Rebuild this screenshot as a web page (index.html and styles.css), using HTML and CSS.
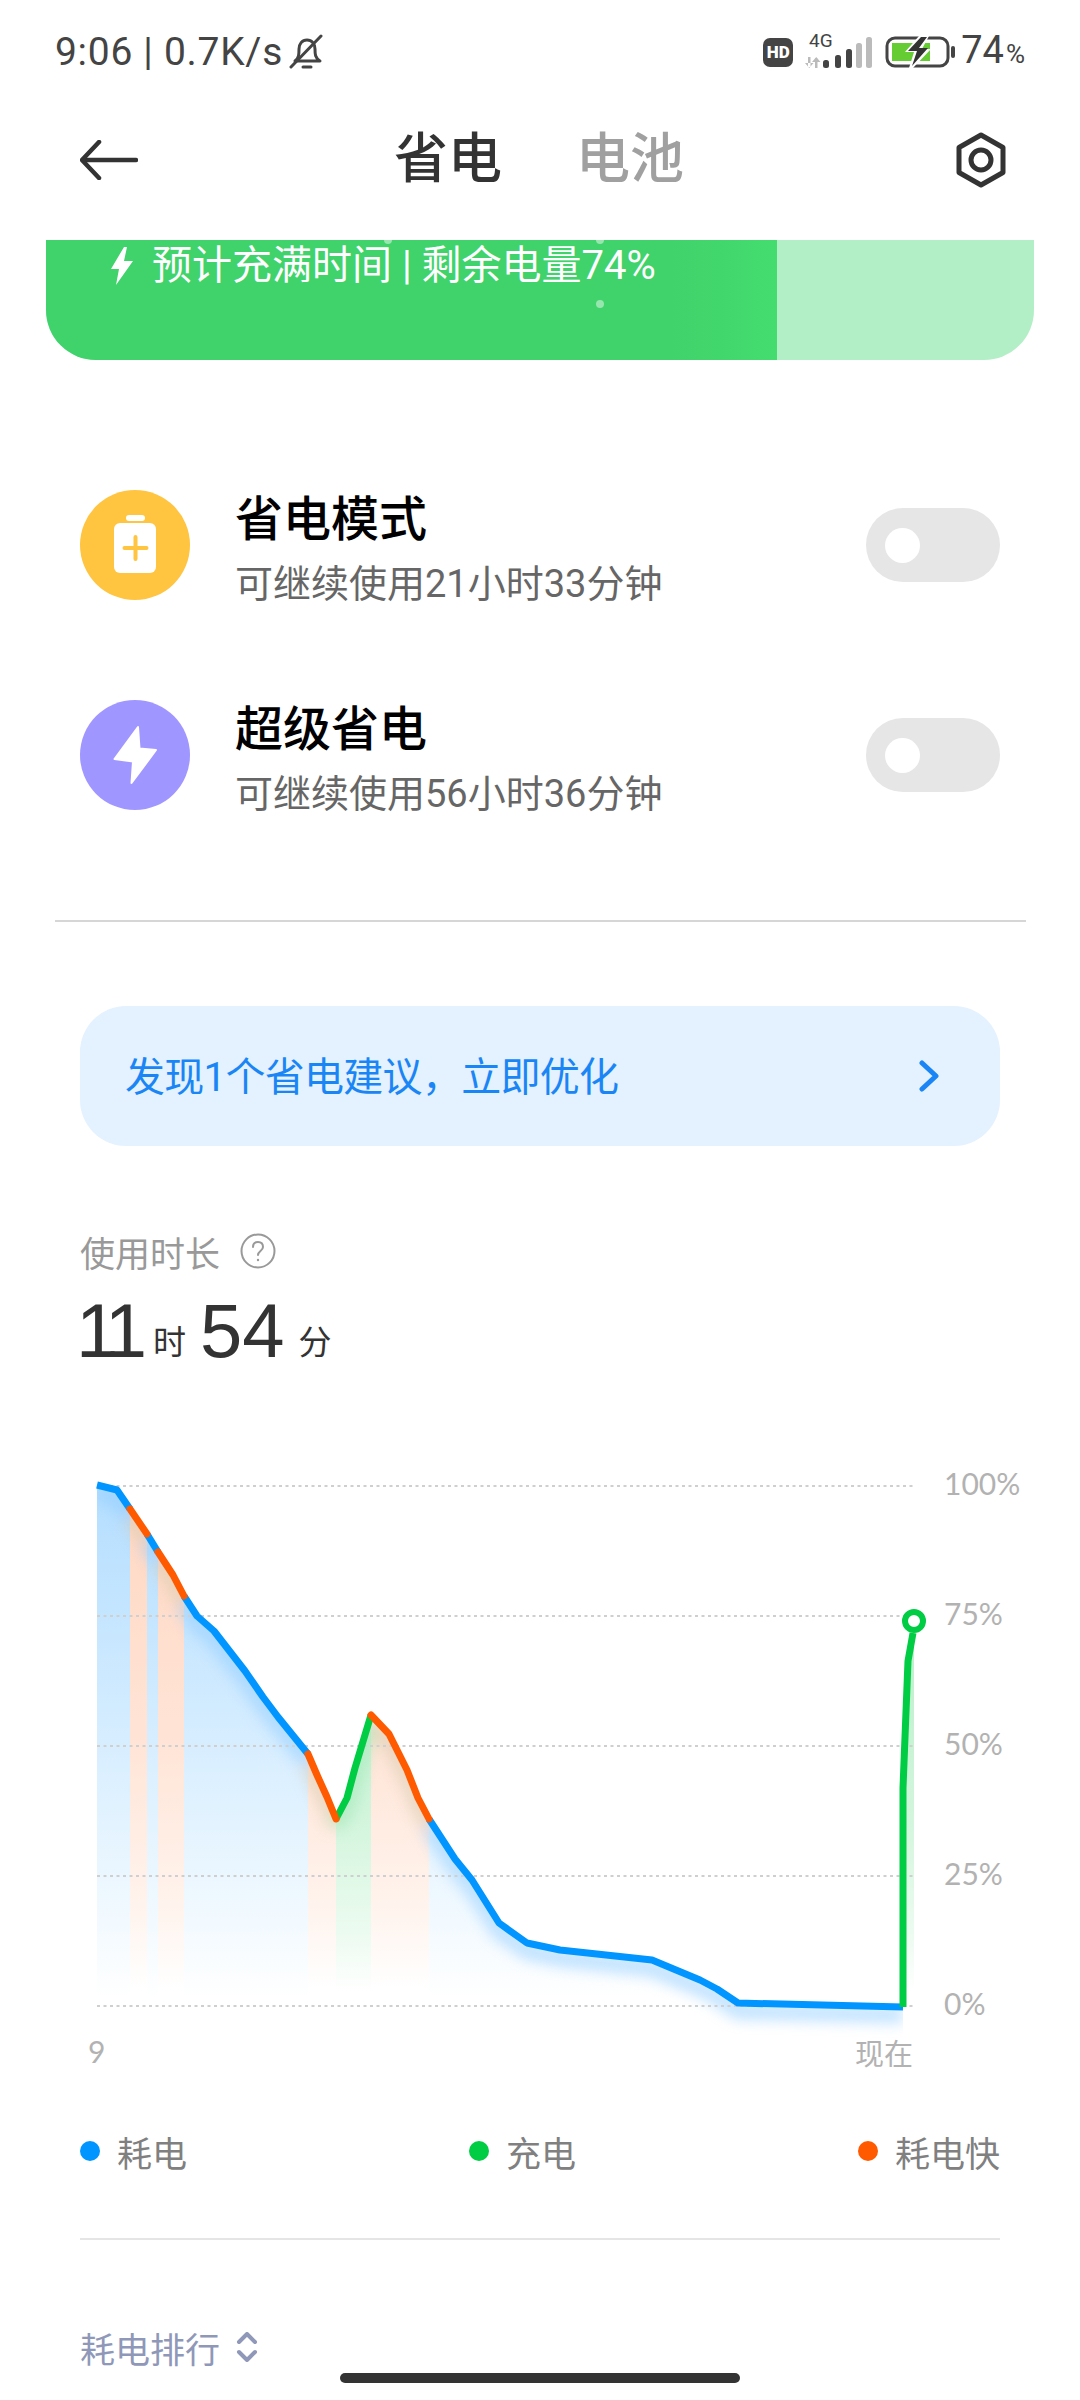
FILE: index.html
```html
<!DOCTYPE html>
<html lang="zh-CN">
<head>
<meta charset="UTF-8">
<title>省电</title>
<link rel="stylesheet" href="styles.css">
</head>
<body>

<div class="status">
  <div class="status-left">
    <span class="status-text">9:06 | 0.7K/s</span>
    <svg class="bell" width="36" height="36" viewBox="0 0 36 36" fill="none" stroke="#444" stroke-width="3" stroke-linecap="round" stroke-linejoin="round">
      <path d="M7 27c4-3 4-7 4-12 0-5 3-9 8-9s8 4 8 9c0 5 0 9 5 12z"/>
      <path d="M15 33h8"/>
      <path d="M3 33L33 2"/>
    </svg>
  </div>
  <div class="status-right">
    <span class="hd">HD</span>
    <svg class="net" width="66" height="44" viewBox="0 -4 66 44">
      <text x="4" y="13" class="net-text">4G</text>
      <path d="M3 23v10h2.500v-10zM0 29h8.500l-4.250 5zM10 24v10h2.500v-10zM7 28h8.500l-4.250-5z" fill="#bbb"/>
      <rect x="18" y="26" width="6" height="8" rx="2.500" fill="#444"/>
      <rect x="30" y="21" width="6" height="13" rx="2.500" fill="#444"/>
      <rect x="41" y="15" width="6" height="19" rx="2.500" fill="#444"/>
      <rect x="51" y="9" width="6" height="25" rx="2.500" fill="#bbb"/>
      <rect x="61" y="3" width="6" height="31" rx="2.500" fill="#bbb"/>
    </svg>
    <svg class="batt" width="70" height="32" viewBox="0 0 70 32">
      <rect x="2" y="2" width="61" height="28" rx="8" fill="none" stroke="#444" stroke-width="3"/>
      <rect x="7" y="7" width="38" height="18" fill="#66cc33"/>
      <path d="M34 0L20 16h9l-5 16 4 0 18-19h-9l7-13z" fill="#fff"/>
      <path d="M36 1L23 15h9l-5 15 16-18h-9l8-11z" fill="#333"/>
      <rect x="66" y="10" width="4" height="12" rx="2" fill="#444"/>
    </svg>
    <span class="pct">74<small>%</small></span>
  </div>
</div>

<div class="nav">
  <svg class="back" width="58" height="40" viewBox="0 0 58 40" fill="none" stroke="#333" stroke-width="4.500" stroke-linecap="round" stroke-linejoin="round">
    <path d="M56 20H3"/>
    <path d="M19 2L2 20l17 18"/>
  </svg>
  <div class="tabs">
    <span class="tab active">省电</span>
    <span class="tab">电池</span>
  </div>
  <svg class="gear" width="54" height="56" viewBox="0 0 54 56" fill="none" stroke="#333" stroke-width="5" stroke-linejoin="round">
    <path d="M27 3l22 12.500v25L27 53 5 40.500v-25z"/>
    <circle cx="27" cy="28" r="10"/>
  </svg>
</div>

<div class="banner">
  <div class="banner-fill"></div>
  <i class="bubble b1"></i><i class="bubble b2"></i><i class="bubble b3"></i>
  <div class="banner-text">
    <svg width="24" height="38" viewBox="0 0 24 38" fill="#fff"><path d="M14 0L1 22h8l-3 16 17-24h-9l3-14z"/></svg>
    <span>预计充满时间 | 剩余电量74%</span>
  </div>
</div>

<div class="modes">
  <div class="mode">
    <div class="mode-icon orange">
      <svg width="110" height="110" viewBox="0 0 110 110">
        <rect x="46" y="25" width="19" height="6" rx="3" fill="#fff"/>
        <rect x="34" y="33" width="42" height="50" rx="6" fill="#fff"/>
        <path d="M44.500 58h22M55.500 47v22" stroke="#ffc440" stroke-width="4" stroke-linecap="round"/>
      </svg>
    </div>
    <div class="mode-text">
      <div class="mode-title">省电模式</div>
      <div class="mode-sub">可继续使用21小时33分钟</div>
    </div>
    <div class="toggle"><i></i></div>
  </div>
  <div class="mode">
    <div class="mode-icon purple">
      <svg width="110" height="110" viewBox="0 0 110 110">
        <path d="M58 27L34.500 59 53 61.500 51.500 83 76 50 59.500 48.500z" fill="#fff" stroke="#fff" stroke-width="2" stroke-linejoin="round"/>
      </svg>
    </div>
    <div class="mode-text">
      <div class="mode-title">超级省电</div>
      <div class="mode-sub">可继续使用56小时36分钟</div>
    </div>
    <div class="toggle"><i></i></div>
  </div>
</div>

<div class="divider"></div>

<div class="tip">
  <span class="tip-text">发现1个省电建议，立即优化</span>
  <svg width="22" height="32" viewBox="0 0 22 32" fill="none" stroke="#1a86f5" stroke-width="5" stroke-linecap="round" stroke-linejoin="round"><path d="M4 3l14 13L4 29"/></svg>
</div>

<div class="usage-label">
  <span>使用时长</span>
  <svg width="36" height="36" viewBox="0 0 36 36" fill="none" stroke="#999" stroke-width="2"><circle cx="18" cy="18" r="16.500"/><path d="M13 14c0-3 2-5 5-5s5 2 5 5c0 4-5 4-5 8" stroke-linecap="round"/><circle cx="18" cy="27" r="1.200" fill="#999" stroke="none"/></svg>
</div>
<div class="usage-value"><b class="hours">11</b><span>时</span><b>54</b><span>分</span></div>

<svg class="chart" width="1080" height="620" viewBox="0 1460 1080 620">
  <defs>
    <linearGradient id="fillBlue" gradientUnits="userSpaceOnUse" x1="0" y1="1486" x2="0" y2="1998">
      <stop offset="0" stop-color="#b4deff"/>
      <stop offset=".4" stop-color="#cfeaff"/>
      <stop offset=".8" stop-color="#eef8ff"/>
      <stop offset="1" stop-color="#fff"/>
    </linearGradient>
    <linearGradient id="fillOrange" gradientUnits="userSpaceOnUse" x1="0" y1="1486" x2="0" y2="1988">
      <stop offset="0" stop-color="#ffd7c2"/>
      <stop offset=".5" stop-color="#ffe4d6"/>
      <stop offset=".85" stop-color="#fff4ee"/>
      <stop offset="1" stop-color="#fff"/>
    </linearGradient>
    <linearGradient id="fillGreen" gradientUnits="userSpaceOnUse" x1="0" y1="1600" x2="0" y2="1992">
      <stop offset="0" stop-color="#b8efc8"/>
      <stop offset=".55" stop-color="#d2f5dc"/>
      <stop offset=".85" stop-color="#ecfbf0"/>
      <stop offset="1" stop-color="#fff"/>
    </linearGradient>
    <filter id="soft" x="-20%" y="-20%" width="140%" height="140%"><feGaussianBlur stdDeviation="7"/></filter>
    <clipPath id="under">
      <polygon points="97,1485 117,1490 130,1509 147,1534 158,1552 173,1575 184,1596 197,1616 214,1631 245,1671 263,1697 278,1717 308,1754 317,1775 327,1797 336,1819 347,1798 355,1768 371,1715 389,1734 407,1770 418,1798 429,1819 455,1859 472,1880 499,1923 527,1943 560,1950 652,1960 700,1980 717,1989 738,2003 903,2007 903,2045 97,2045"/>
    </clipPath>
    <polyline id="blue1" points="97,1485 117,1490 130,1509"/>
    <polyline id="blue2" points="147,1534 158,1552"/>
    <polyline id="blue3" points="184,1596 197,1616 214,1631 245,1671 263,1697 278,1717 308,1754"/>
    <polyline id="blue4" points="429,1819 455,1859 472,1880 499,1923 527,1943 560,1950 652,1960 700,1980 717,1989 738,2003 903,2007"/>
    <polyline id="orange1" points="130,1509 147,1534"/>
    <polyline id="orange2" points="158,1552 173,1575 184,1596"/>
    <polyline id="orange3" points="308,1754 317,1775 327,1797 336,1819"/>
    <polyline id="orange4" points="371,1715 389,1734 407,1770 418,1798 429,1819"/>
    <polyline id="green1" points="336,1819 347,1798 355,1768 371,1715"/>
    <polyline id="green2" points="903,2007 903,1788 908,1661 913,1633"/>
  </defs>

  <!-- areas under the curve -->
  <polygon fill="url(#fillBlue)" points="97,1485 117,1490 130,1509 130,2000 97,2000"/>
  <polygon fill="url(#fillBlue)" points="147,1534 158,1552 158,2000 147,2000"/>
  <polygon fill="url(#fillBlue)" points="184,1596 197,1616 214,1631 245,1671 263,1697 278,1717 308,1754 308,2000 184,2000"/>
  <polygon fill="url(#fillBlue)" points="429,1819 455,1859 472,1880 499,1923 527,1943 560,1950 652,1960 700,1980 717,1989 738,2003 903,2007 903,2000 429,2000"/>
  <polygon fill="url(#fillOrange)" points="130,1509 147,1534 147,1988 130,1988"/>
  <polygon fill="url(#fillOrange)" points="158,1552 173,1575 184,1596 184,1988 158,1988"/>
  <polygon fill="url(#fillOrange)" points="308,1754 317,1775 327,1797 336,1819 336,1988 308,1988"/>
  <polygon fill="url(#fillOrange)" points="371,1715 389,1734 407,1770 418,1798 429,1819 429,1988 371,1988"/>
  <polygon fill="url(#fillGreen)" points="336,1819 347,1798 355,1768 371,1715 371,1992 336,1992"/>
  <polygon fill="url(#fillGreen)" points="903,1788 908,1661 914,1633 914,2000 903,2000"/>

  <!-- glow just under the line -->
  <g clip-path="url(#under)" fill="none" filter="url(#soft)" stroke-width="16" opacity=".55">
    <g stroke="#8ccbff" transform="translate(0 8)">
      <use href="#blue1"/><use href="#blue2"/><use href="#blue3"/><use href="#blue4"/>
    </g>
    <g stroke="#d8c9ac" transform="translate(0 8)">
      <use href="#orange1"/><use href="#orange2"/><use href="#orange3"/><use href="#orange4"/>
    </g>
    <use href="#green1" stroke="#9be6b4" transform="translate(0 8)"/>
  </g>

  <g class="grid">
    <path d="M97 1486H914"/>
    <path d="M97 1616H914"/>
    <path d="M97 1746H914"/>
    <path d="M97 1876H914"/>
    <path d="M97 2006H914"/>
  </g>

  <g class="line line-blue"><use href="#blue1"/><use href="#blue2"/><use href="#blue3"/><use href="#blue4"/></g>
  <g class="line line-green"><use href="#green1"/><use href="#green2"/></g>
  <g class="line line-orange"><use href="#orange1"/><use href="#orange2"/><use href="#orange3"/><use href="#orange4"/></g>
  <circle cx="914" cy="1621" r="9" fill="#fff" stroke="#00cc44" stroke-width="6"/>

  <text class="axis" x="944" y="1495">100%</text>
  <text class="axis" x="944" y="1625">75%</text>
  <text class="axis" x="944" y="1755">50%</text>
  <text class="axis" x="944" y="1885">25%</text>
  <text class="axis" x="944" y="2015">0%</text>
  <text class="axis" x="88" y="2063">9</text>
  <text class="axis-now" x="855" y="2065">现在</text>
</svg>

<div class="legend">
  <div class="legend-item"><i class="dot dot-blue"></i>耗电</div>
  <div class="legend-item"><i class="dot dot-green"></i>充电</div>
  <div class="legend-item"><i class="dot dot-orange"></i>耗电快</div>
</div>

<div class="divider-soft"></div>

<div class="rank">
  <span>耗电排行</span>
  <svg width="22" height="30" viewBox="0 0 22 30" fill="none" stroke="#8f98b8" stroke-width="4" stroke-linecap="round" stroke-linejoin="round"><path d="M3 10l8-8 8 8M3 20l8 8 8-8"/></svg>
</div>

<div class="home-bar"></div>

</body>
</html>
```

FILE: styles.css
```css
*{box-sizing:border-box;}
body{margin:0;width:1080px;height:2400px;position:relative;overflow:hidden;background:#fff;font-family:Roboto,"Noto Sans CJK SC",sans-serif;color:#333;}

.status{height:80px;display:flex;justify-content:space-between;align-items:center;padding:24px 55px 0 55px;}
.status-left{display:flex;align-items:center;gap:5px;font-size:39px;color:#444;height:40px;}
.status-text{letter-spacing:.7px;}
.status-right{display:flex;align-items:center;height:40px;}
.hd{width:30px;height:29px;border-radius:7px;background:#444;color:#fff;font-size:17px;font-weight:900;display:flex;align-items:center;justify-content:center;}
.net{margin-left:12px;overflow:visible;}
.net-text{font-size:19px;fill:#444;}
.batt{margin-left:14px;}
.pct{margin-left:6px;font-size:38px;color:#444;line-height:40px;}
.pct small{font-size:26px;margin-left:2px;}

.nav{height:160px;display:flex;align-items:center;padding:0 72px 0 80px;}
.tabs{flex:1;display:flex;gap:74px;padding-left:256px;}
.tab{font-size:54px;font-weight:500;color:#a0a0a0;line-height:70px;}
.tab.active{color:#333;}

.banner{height:120px;margin:0 46px;position:relative;overflow:hidden;background:#b3efc6;border-radius:0 0 50px 50px;}
.banner-fill{position:absolute;left:0;top:0;bottom:0;width:731px;background:linear-gradient(90deg,#40d26b 85%,#44dc6f);}
.banner-text{position:absolute;left:64px;top:4px;display:flex;align-items:center;gap:18px;color:#fff;font-size:40px;line-height:44px;}
.bubble{position:absolute;width:8px;height:8px;border-radius:50%;background:rgba(255,255,255,.45);}
.b1{left:338px;top:-4px;}
.b2{left:550px;top:-4px;}
.b3{left:550px;top:60px;}

.modes{margin-top:130px;padding:0 80px;display:flex;flex-direction:column;gap:100px;}
.mode{height:110px;display:flex;align-items:center;gap:45px;}
.mode-icon{width:110px;height:110px;border-radius:50%;}
.mode-icon svg{display:block;}
.orange{background:#ffc440;}
.purple{background:#a096ff;}
.mode-text{flex:1;align-self:flex-start;}
.mode-title{font-size:48px;font-weight:500;color:#000;line-height:60px;}
.mode-sub{font-size:38px;color:#666;line-height:50px;margin-top:9px;}
.toggle{width:134px;height:74px;border-radius:37px;background:#e6e6e6;display:flex;align-items:center;padding-left:19px;}
.toggle i{width:35px;height:35px;border-radius:50%;background:#fff;}

.divider{height:2px;margin:110px 54px 0 55px;background:#d6d6d6;}

.tip{height:140px;margin:84px 80px 0;border-radius:46px;background:#e4f1ff;display:flex;justify-content:space-between;align-items:center;padding:0 60px 0 45px;color:#1a86f5;font-size:40px;letter-spacing:-.7px;}
.tip-text{margin-bottom:4px;}

.usage-label{margin:85px 80px 0;height:40px;display:flex;align-items:center;gap:20px;font-size:35px;color:#999;}
.usage-value{margin:0 80px;height:109px;display:flex;align-items:baseline;gap:14px;padding-top:15px;}
.usage-value b{font-family:"Liberation Sans",sans-serif;font-size:76px;font-weight:400;color:#333;line-height:90px;}
.usage-value .hours{letter-spacing:-8px;margin-left:-4px;}
.usage-value span{font-size:33px;color:#333;transform:translateY(-3px);}

.chart{display:block;margin-top:80px;}
.grid path{stroke:#cfcfcf;stroke-width:2;stroke-dasharray:3 3.500;fill:none;}
.line{fill:none;stroke-width:7;stroke-linejoin:round;stroke-linecap:butt;}
.line-blue{stroke:#0095ff;}
.line-green{stroke:#00cc44;}
.line-orange{stroke:#ff5a00;stroke-linecap:round;}
.axis{font-family:Lato,sans-serif;font-size:30px;fill:#b2b2b2;}
.axis-now{font-family:"Noto Sans CJK SC",sans-serif;font-size:29px;fill:#b2b2b2;}

.legend{margin:51px 80px 0;height:40px;display:flex;justify-content:space-between;align-items:center;font-size:35px;color:#808080;}
.legend-item{display:flex;align-items:center;gap:17px;}
.dot{width:20px;height:20px;border-radius:50%;}
.dot-blue{background:#0095ff;}
.dot-green{background:#00cc44;}
.dot-orange{background:#ff5a00;}

.divider-soft{height:2px;margin:67px 80px 0;background:#e5e5e5;}

.rank{margin:87px 80px 0;height:40px;display:flex;align-items:center;gap:16px;font-size:35px;color:#8f98b8;}

.home-bar{position:absolute;left:340px;bottom:17px;width:400px;height:10px;border-radius:5px;background:#333;}
```
